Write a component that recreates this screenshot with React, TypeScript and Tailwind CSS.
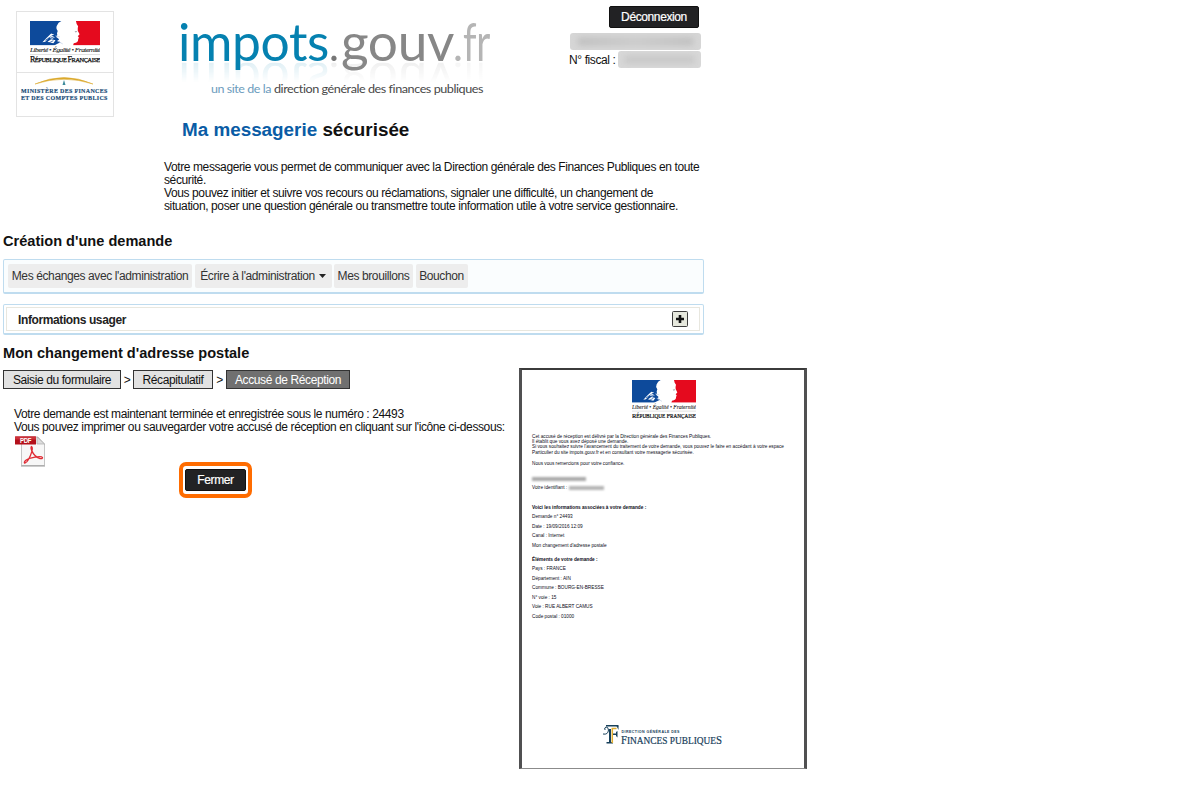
import type { ReactNode } from "react";

function Marianne() {
  return (
    <svg viewBox="0 0 192 66" preserveAspectRatio="none">
      <rect width="192" height="66" fill="#fff" />
      <path d="M0 0H86Q77 4 74 12Q70 19 76 27L74 33Q77 39 72 43L80 49L76 53L84 57L78 60L66 66H0Z" fill="#0d4a9b" />
      <path d="M126 0H192V66H118L120 60Q133 58 132 50L134 44L131 41L136 36L131 26Q130 20 132 14L128 8Z" fill="#e50a1e" />
      <path d="M34 57L46 45L58 34L67 37L58 39L68 44L62 48L52 45L42 56Z M48 56L58 49L70 52L64 60L54 58Z" fill="#fff" />
      <path d="M42 52L56 43L66 46M50 60L64 53" stroke="#0d4a9b" strokeWidth="2" fill="none" />
      <path d="M70 40L82 43M74 53L90 62" stroke="#c4d2e6" strokeWidth="2" />
      <path d="M122 28L130 27L126 31Z" fill="#8b8b94" />
    </svg>
  );
}

function Republique({ className }: { className: string }) {
  return (
    <svg className={className} viewBox="0 0 70 42" preserveAspectRatio="none">
      <svg x="0" y="0" width="70" height="24.500">
        <Marianne />
      </svg>
      <text x="0" y="31" textLength="70" lengthAdjust="spacingAndGlyphs" fontFamily="Liberation Serif, serif" fontStyle="italic" fontSize="6.200" fill="#222" stroke="#222" strokeWidth="0.1">
        Liberté • Égalité • Fraternité
      </text>
      <path d="M0 33.500H70" stroke="#ccc" strokeWidth="0.6" />
      <text x="0" y="41" textLength="70" lengthAdjust="spacingAndGlyphs" fontFamily="Liberation Serif, serif" fontSize="6" fill="#111" stroke="#111" strokeWidth="0.25">
        <tspan fontSize="7.500">R</tspan>ÉPUBLIQUE <tspan fontSize="7.500">F</tspan>RANÇAISE
      </text>
    </svg>
  );
}

function MinistryLogo() {
  return (
    <div className="ml-[16px] mt-[11px] flex h-[106px] w-[98px] shrink-0 flex-col border border-[#e3e3e3]">
      <div className="flex h-[61px] justify-center border-b border-[#e3e3e3] pt-[9px]">
        <Republique className="h-[42px] w-[70px]" />
      </div>
      <svg className="h-[32px] w-[96px]" viewBox="0 0 96 32">
        <path d="M18 11Q47 -2 76 11Q47 1.500 18 11Z" fill="#dba92c" stroke="#dba92c" strokeWidth="0.5" />
        <path d="M47 7L48.500 12H45.500Z" fill="#3d8a9b" />
        <g fontFamily="Liberation Serif, serif" fontWeight="bold" fontSize="6" fill="#174a75" stroke="#174a75" strokeWidth="0.15">
          <text x="4" y="20" textLength="86" lengthAdjust="spacing">MINISTÈRE DES FINANCES</text>
          <text x="4" y="26.500" textLength="86" lengthAdjust="spacing">ET DES COMPTES PUBLICS</text>
        </g>
      </svg>
    </div>
  );
}

function WordMark() {
  return (
    <div className="h-[100px] w-[320px]">
      <svg
        className="h-[70px] w-[320px] [-webkit-box-reflect:below_-25px_linear-gradient(transparent_52%,rgba(0,0,0,0.12)_80%,transparent_81%)]"
        viewBox="174 4 320 70"
        fontFamily="Lato, sans-serif"
        fontSize="53"
      >
        <text x="178" y="61" textLength="151" lengthAdjust="spacingAndGlyphs" fill="#0581b0">impots</text>
        <text x="329" y="61" fontSize="42" fill="#777">.</text>
        <text x="341" y="61" textLength="113" lengthAdjust="spacingAndGlyphs" fill="#878787">gouv</text>
        <text x="453" y="61" fontSize="42" fill="#b5b5b5">.</text>
        <text x="463" y="61" textLength="27" lengthAdjust="spacingAndGlyphs" fill="#b5b5b5">fr</text>
      </svg>
      <svg className="mt-[6px] h-[18px] w-[320px]" viewBox="174 80 320 18" fontFamily="Lato, sans-serif" fontSize="11">
        <text x="211" y="93" textLength="60" lengthAdjust="spacingAndGlyphs" fill="#6c9cbd">un site de la</text>
        <text x="274" y="93" textLength="209" lengthAdjust="spacingAndGlyphs" fill="#484848">direction générale des finances publiques</text>
      </svg>
    </div>
  );
}

function DarkButton({ className, children }: { className: string; children: ReactNode }) {
  return (
    <button className={`flex items-center justify-center rounded-[2px] border border-[#111] bg-[#222224] text-white [-webkit-text-stroke:0.2px_white] ${className}`}>
      {children}
    </button>
  );
}

function PdfIcon() {
  return (
    <svg className="h-[31px] w-[32px]" viewBox="0 0 32 31">
      <path d="M7.500 1H24L30.500 8V29.500H7.500Z" fill="#f7f7f7" stroke="#c4c4c4" />
      <path d="M23 1V8H30.500Z" fill="#ddd" stroke="#aaa" strokeWidth="0.7" />
      <path d="M7 30H31" stroke="#999" />
      <path d="M17.500 10.500C16 12 18.500 17 21 19.500C24 23 29 23.500 28.500 21.500C27.500 19.500 15 21.500 11.500 24.500C8.500 28 12 28 14.500 23.500C17.500 18 19.500 11.500 17.500 10.500Z" fill="none" stroke="#e02c35" strokeWidth="1.300" />
      <rect x="1" y="0.500" width="21" height="8" rx="0.600" fill="#b3101a" />
      <rect x="1" y="0.500" width="21" height="3" fill="#cc3038" />
      <text x="6" y="7" textLength="11" lengthAdjust="spacingAndGlyphs" fontFamily="Liberation Sans, sans-serif" fontWeight="bold" fontSize="6.500" fill="#fff">PDF</text>
    </svg>
  );
}

function FinancesLogo() {
  return (
    <svg className="ml-[70px] h-[24px] w-[124px]" viewBox="602 724 124 24">
      <path d="M606 726H618.500V727.500H606Z M609 730H611V743H609Z M606.500 743H613V744.500H606.500Z M612.500 734.500H617V736H612.500Z" fill="#18415b" />
      <path d="M603 735Q608 736 608.500 731Q608 727.500 606 728Q604 728.500 605 731" fill="none" stroke="#18415b" strokeWidth="1" />
      <path d="M616.500 727H618.500V731ZM616 733L617.500 732V738.500L616 737Z" fill="#18415b" />
      <path d="M612.300 744V729.500H616.500" fill="none" stroke="#e3ae2f" strokeWidth="1.500" />
      <g fontFamily="Liberation Serif, serif" fill="#18415b">
        <text x="621.500" y="734" textLength="58" lengthAdjust="spacing" fontFamily="Liberation Sans, sans-serif" fontWeight="bold" fontSize="3.600">DIRECTION GÉNÉRALE DES</text>
        <text x="621" y="744.500" textLength="101" lengthAdjust="spacingAndGlyphs" fontSize="10" stroke="#18415b" strokeWidth="0.200">
          <tspan fontSize="11.500">F</tspan>INANCES PUBLIQUE<tspan fontSize="11.500">S</tspan>
        </text>
      </g>
    </svg>
  );
}

const requestLines = ["Demande n° 24493", "Date : 19/09/2016 12:09", "Canal : Internet", "Mon changement d'adresse postale"];
const detailLines = ["Pays : FRANCE", "Département : AIN", "Commune : BOURG-EN-BRESSE", "N° voie : 15", "Voie : RUE ALBERT CAMUS", "Code postal : 01000"];

function Receipt() {
  return (
    <article className="h-[401px] w-[288px] shrink-0 border-x-[3px] border-b border-t-[2px] border-x-[#505051] border-b-[#8b8b8b] border-t-[#3b3b3b] bg-white pl-[10px] pt-[10px] text-[4.73px] tracking-normal text-[#0c0c18]">
      <Republique className="ml-[100px] h-[39px] w-[64px]" />
      <div className="mt-[14.500px] whitespace-nowrap leading-[5.4px]">
        <p>Cet accusé de réception est délivré par la Direction générale des Finances Publiques.</p>
        <p>Il établit que vous avez déposé une demande.</p>
        <p>Si vous souhaitez suivre l'avancement du traitement de votre demande, vous pouvez le faire en accédant à votre espace</p>
        <p>Particulier du site impots.gouv.fr et en consultant votre messagerie sécurisée.</p>
        <p className="mt-[6px]">Nous vous remercions pour votre confiance.</p>
      </div>
      <div className="mt-[10px] h-[4px] w-[54px] bg-[#aaa] blur-[1px]" />
      <div className="mt-[3px] flex h-[9px] items-center gap-[2px]">
        <span>Votre identifiant :</span>
        <span className="h-[4px] w-[35px] bg-[#b5b5b5] blur-[1px]" />
      </div>
      <div className="mt-[10px] leading-[9.5px]">
        <p className="font-bold">Voici les informations associées à votre demande :</p>
        {requestLines.map((line) => <p key={line}>{line}</p>)}
      </div>
      <div className="mt-[4.500px] leading-[9.5px]">
        <p className="font-bold">Éléments de votre demande :</p>
        {detailLines.map((line) => <p key={line}>{line}</p>)}
      </div>
      <div className="h-[102px]" />
      <FinancesLogo />
    </article>
  );
}

function MenuItem({ className, children }: { className: string; children: ReactNode }) {
  return <a className={`flex h-[24px] items-center justify-center whitespace-nowrap rounded-[2px] bg-[#ededed] text-[#333] ${className}`}>{children}</a>;
}

export default function App() {
  return (
    <main className="h-[800px] w-[1200px] overflow-hidden bg-white font-['Liberation_Sans',sans-serif] text-[12px] tracking-[-0.39px] text-[#111]">
      <header className="flex h-[117px] w-[703px]">
        <MinistryLogo />
        <div className="ml-[60px] mt-[4px]">
          <WordMark />
        </div>
        <div className="ml-auto mr-[2px] mt-[6px] flex w-[132px] flex-col items-end">
          <DarkButton className="mr-[2px] h-[22px] w-[90px]">Déconnexion</DarkButton>
          <div className="mt-[5px] h-[17px] w-[131px] overflow-hidden rounded-[3px] bg-[#d6d6d6]">
            <div className="mx-[8px] mt-[5px] h-[7px] bg-linear-to-r from-[#bcbcbc] via-[#c9c9c9] to-[#bcbcbc] blur-[3px]" />
          </div>
          <div className="mt-[1px] flex h-[17px] w-full items-center justify-between">
            <span className="whitespace-nowrap">N° fiscal :</span>
            <div className="h-[17px] w-[83px] overflow-hidden rounded-[3px] bg-[#d8d8d8]">
              <div className="mx-[6px] mt-[5px] h-[7px] bg-[#c6c6c6] blur-[3px]" />
            </div>
          </div>
        </div>
      </header>
      <h1 className="ml-[182px] h-[44px] text-[18.85px] font-bold leading-[26px] tracking-normal">
        <span className="text-[#0a5ca5]">Ma messagerie</span> sécurisée
      </h1>
      <div className="ml-[164px] h-[70px] whitespace-nowrap leading-[13px]">
        <p>Votre messagerie vous permet de communiquer avec la Direction générale des Finances Publiques en toute</p>
        <p>sécurité.</p>
        <p>Vous pouvez initier et suivre vos recours ou réclamations, signaler une difficulté, un changement de</p>
        <p>situation, poser une question générale ou transmettre toute information utile à votre service gestionnaire.</p>
      </div>
      <h2 className="ml-[3px] h-[28px] text-[14.57px] font-bold leading-[20px] tracking-normal">Création d'une demande</h2>
      <nav className="ml-[3px] flex h-[35px] w-[701px] gap-[2.500px] rounded-[2px] border border-b-2 border-[#bfdcef] bg-[#fafdfe] pl-[4px] pt-[4px]">
        <MenuItem className="w-[184px]">Mes échanges avec l'administration</MenuItem>
        <MenuItem className="w-[137px] gap-[4px]">
          Écrire à l'administration
          <svg className="h-[4px] w-[7px]" viewBox="0 0 7 4"><path d="M0 0H7L3.500 4Z" fill="#222" /></svg>
        </MenuItem>
        <MenuItem className="w-[79px]">Mes brouillons</MenuItem>
        <MenuItem className="w-[52px]">Bouchon</MenuItem>
      </nav>
      <section className="ml-[3px] mt-[10px] h-[31px] w-[701px] rounded-[2px] border border-b-2 border-[#bfdcef] p-[2px]">
        <div className="flex h-[24px] w-[694px] items-center justify-between border border-[#e8e7df] pl-[11px] pr-[11px]">
          <h3 className="pt-[2px] font-bold text-[#222]">Informations usager</h3>
          <svg className="h-[16px] w-[16px]" viewBox="0 0 16 16">
            <rect x="0.500" y="0.500" width="15" height="15" rx="1" fill="#e6e8dd" stroke="#3d3d3d" />
            <path d="M8 4V12M4 8H12" stroke="#111" strokeWidth="2.600" />
          </svg>
        </div>
      </section>
      <h2 className="ml-[3px] mt-[8px] h-[25px] text-[14.57px] font-bold leading-[20px] tracking-normal">Mon changement d'adresse postale</h2>
      <div className="flex">
        <div className="w-[519px] shrink-0">
          <div className="ml-[3px] mt-[2px] flex h-[19px] items-center whitespace-nowrap">
            <span className="flex h-full w-[118px] items-center justify-center border border-[#333] bg-[#e2e2e2]">Saisie du formulaire</span>
            <span className="w-[12px] text-center">&gt;</span>
            <span className="flex h-full w-[80px] items-center justify-center border border-[#333] bg-[#e2e2e2]">Récapitulatif</span>
            <span className="w-[13px] text-center">&gt;</span>
            <span className="flex h-full w-[124px] items-center justify-center border border-[#333] bg-[#707070] text-white">Accusé de Réception</span>
          </div>
          <div className="ml-[14px] mt-[19px] whitespace-nowrap leading-[13px]">
            <p>Votre demande est maintenant terminée et enregistrée sous le numéro : 24493</p>
            <p>Vous pouvez imprimer ou sauvegarder votre accusé de réception en cliquant sur l'icône ci-dessous:</p>
          </div>
          <div className="ml-[14px] mt-[2px] h-[26px]">
            <PdfIcon />
          </div>
          <div className="ml-[179px] flex h-[36px] w-[73px] items-center justify-center rounded-[7px] border-[4px] border-[#ff6c00]">
            <DarkButton className="h-[22px] w-[61px]">Fermer</DarkButton>
          </div>
        </div>
        <Receipt />
      </div>
    </main>
  );
}
